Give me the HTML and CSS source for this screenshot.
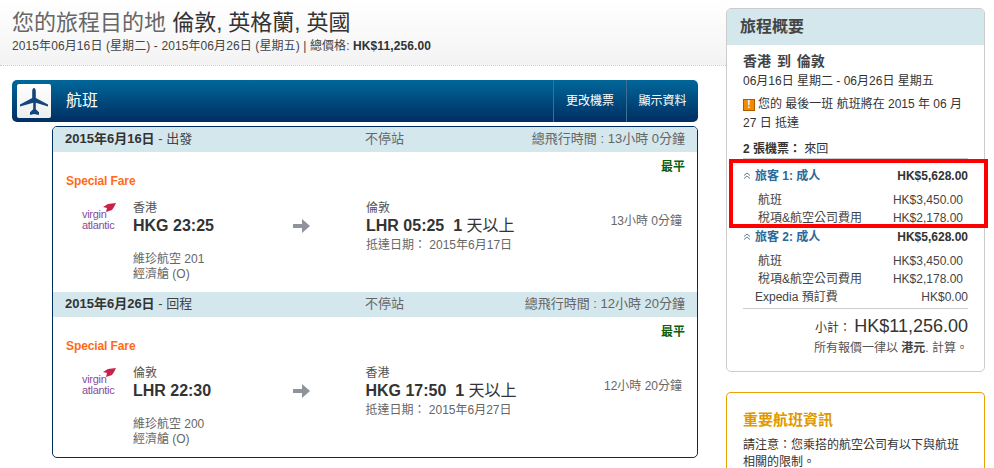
FILE: index.html
```html
<!DOCTYPE html>
<html lang="zh-Hant">
<head>
<meta charset="UTF-8">
<title>Expedia - 航班</title>
<link rel="stylesheet" href="styles.css">
</head>
<body>
<div class="page">
  <main class="main">
    <header class="trip-head">
      <h1>您的旅程目的地 <strong>倫敦, 英格蘭, 英國</strong></h1>
      <p>2015年06月16日 (星期二) - 2015年06月26日 (星期五) | 總價格: <b>HK$11,256.00</b></p>
    </header>

    <div class="flight-bar">
      <div class="plane-box">
        <svg width="34" height="34" viewBox="0 0 34 34"><path fill="#14457a" d="M17 4c1 0 1.800 1.500 1.800 3.500V14l12.200 6.500v2l-12.200-3.700v6.500l3.200 3V31L17 30l-4 1v-2.700l3.200-3v-6.500L3 22.500v-2L15.200 14V7.500C15.200 5.500 16 4 17 4z"/></svg>
      </div>
      <div class="bar-title">航班</div>
      <a class="bar-link">更改機票</a>
      <a class="bar-link">顯示資料</a>
    </div>

    <div class="flight-card">
      <!-- 去程 -->
      <div class="leg-head">
        <div class="leg-date"><b>2015年6月16日</b> - 出發</div>
        <div class="leg-stop">不停站</div>
        <div class="leg-total">總飛行時間 : 13小時 0分鐘</div>
      </div>
      <div class="leg-body">
        <div class="cheapest">最平</div>
        <div class="fare">Special Fare</div>
        <div class="leg-row">
          <div class="logo">
            <svg width="13" height="9" viewBox="0 0 13 9"><path fill="#c8214a" d="M13 0 5 1 0 4l4 1-1 4 6-2 2-3z"/></svg>
            <span>virgin<br>atlantic</span>
          </div>
          <div class="depart">
            <div class="city">香港</div>
            <div class="time">HKG 23:25</div>
            <div class="carrier">維珍航空 201<br>經濟艙 (O)</div>
          </div>
          <div class="arrow">
            <svg width="17" height="14" viewBox="0 0 17 14"><path fill="#8e9499" d="M0 5h9V0l8 7-8 7V9H0z"/></svg>
          </div>
          <div class="arrive">
            <div class="city">倫敦</div>
            <div class="time">LHR 05:25&nbsp; 1 <span class="plus">天以上</span></div>
            <div class="arrive-date">抵達日期： 2015年6月17日</div>
          </div>
          <div class="duration">13小時 0分鐘</div>
        </div>
      </div>

      <!-- 回程 -->
      <div class="leg-head">
        <div class="leg-date"><b>2015年6月26日</b> - 回程</div>
        <div class="leg-stop">不停站</div>
        <div class="leg-total">總飛行時間 : 12小時 20分鐘</div>
      </div>
      <div class="leg-body">
        <div class="cheapest">最平</div>
        <div class="fare">Special Fare</div>
        <div class="leg-row">
          <div class="logo">
            <svg width="13" height="9" viewBox="0 0 13 9"><path fill="#c8214a" d="M13 0 5 1 0 4l4 1-1 4 6-2 2-3z"/></svg>
            <span>virgin<br>atlantic</span>
          </div>
          <div class="depart">
            <div class="city">倫敦</div>
            <div class="time">LHR 22:30</div>
            <div class="carrier">維珍航空 200<br>經濟艙 (O)</div>
          </div>
          <div class="arrow">
            <svg width="17" height="14" viewBox="0 0 17 14"><path fill="#8e9499" d="M0 5h9V0l8 7-8 7V9H0z"/></svg>
          </div>
          <div class="arrive">
            <div class="city">香港</div>
            <div class="time">HKG 17:50&nbsp; 1 <span class="plus">天以上</span></div>
            <div class="arrive-date">抵達日期： 2015年6月27日</div>
          </div>
          <div class="duration">12小時 20分鐘</div>
        </div>
      </div>
    </div>
  </main>

  <aside class="side">
    <div class="summary">
      <h2>旅程概要</h2>
      <div class="summary-body">
        <div class="route">香港 到 倫敦</div>
        <div class="route-date">06月16日 星期二 - 06月26日 星期五</div>
        <div class="notice"><i class="warn">!</i>您的 最後一班 航班將在 2015 年 06 月 27 日 抵達</div>
        <div class="tickets"><b>2 張機票：</b> 來回</div>

        <div class="traveler first">
          <div class="highlight"></div>
          <div class="trav-head"><span class="trav-name"><svg class="chev" width="8" height="7" viewBox="0 0 8 7"><path fill="none" stroke="#5f7f96" d="M1 3.500 4 1l3 2.500M1 6.500 4 4l3 2.500"/></svg>旅客 1: 成人</span><b>HK$5,628.00</b></div>
          <div class="fee"><span>航班</span><span>HK$3,450.00</span></div>
          <div class="fee"><span>稅項&amp;航空公司費用</span><span>HK$2,178.00</span></div>
        </div>
        <div class="traveler">
          <div class="trav-head"><span class="trav-name"><svg class="chev" width="8" height="7" viewBox="0 0 8 7"><path fill="none" stroke="#5f7f96" d="M1 3.500 4 1l3 2.500M1 6.500 4 4l3 2.500"/></svg>旅客 2: 成人</span><b>HK$5,628.00</b></div>
          <div class="fee"><span>航班</span><span>HK$3,450.00</span></div>
          <div class="fee"><span>稅項&amp;航空公司費用</span><span>HK$2,178.00</span></div>
        </div>
        <div class="booking-fee"><span>Expedia 預訂費</span><span>HK$0.00</span></div>

        <div class="subtotal">小計： <span>HK$11,256.00</span></div>
        <div class="currency">所有報價一律以 <b>港元</b>. 計算。</div>
      </div>
    </div>

    <div class="important">
      <h3>重要航班資訊</h3>
      <p>請注意：您乘搭的航空公司有以下與航班相關的限制。</p>
    </div>
  </aside>
</div>
</body>
</html>
```

FILE: styles.css
```css
* { margin:0; padding:0; box-sizing:border-box; }
html, body { height:468px; overflow:hidden; }
body { font-family:'Liberation Sans','Noto Sans CJK TC',sans-serif; font-size:12px; color:#333; background:#fff; }
.page { display:flex; align-items:flex-start; }
.main { width:726px; flex:none; }

/* HEAD */
.trip-head { height:66px; padding:9px 0 0 12px; border-bottom:1px dotted #ccc; background:linear-gradient(#fff,#f3f3f3); }
.trip-head h1 { font-size:22px; line-height:27px; font-weight:400; color:#666; }
.trip-head h1 strong { font-weight:400; color:#333; }
.trip-head p { font-size:12px; line-height:18px; margin-top:1px; color:#444; letter-spacing:0.1px; }
.trip-head p b { color:#333; }

/* FLIGHT BAR */
.flight-bar { display:flex; align-items:stretch; width:686px; height:42px; margin:14px 0 4px 12px; border-radius:5px; background:linear-gradient(#00679a,#002e62); color:#fff; }
.plane-box { width:34px; height:34px; margin:4px 0 0 5px; background:linear-gradient(#fff,#eee); border-radius:2px; }
.bar-title { flex:1; padding-left:15px; font-size:16px; line-height:41px; }
.bar-link { width:73px; text-align:center; font-size:12px; line-height:42px; border-left:1px solid #3c6f93; }
.bar-link:last-child { width:72px; }

/* FLIGHT CARD */
.flight-card { width:646px; height:332px; margin-left:52px; border:1px solid #002e62; border-radius:5px; overflow:hidden; }
.leg-head { display:flex; height:25px; line-height:24px; padding:0 12px; background:#d3e7ed; font-size:13px; color:#444; }
.leg-date { width:300px; }
.leg-date b { color:#333; }
.leg-stop { width:120px; color:#666; }
.leg-total { flex:1; text-align:right; color:#666; }
.leg-body { height:140px; padding:6px 12px 0; position:relative; }
.cheapest { text-align:right; font-size:12px; line-height:18px; font-weight:700; color:#0b5c0b; }
.fare { font-size:12px; line-height:18px; font-weight:700; color:#ff6a1a; margin:-4px 0 0 1px; letter-spacing:-0.1px; }
.leg-row { display:flex; margin-top:10px; }
.logo { width:68px; padding:9px 0 0 17px; position:relative; color:#8a4b9c; font-size:11px; line-height:11px; letter-spacing:-0.3px; }
.logo svg { position:absolute; left:38px; top:3px; }
.logo span { display:block; }
.depart { width:160px; }
.city { font-size:12px; line-height:16px; color:#555; }
.time { font-size:16px; line-height:20px; font-weight:700; color:#333; white-space:nowrap; }
.plus { font-weight:400; }
.carrier { font-size:12px; line-height:14.500px; color:#666; margin-top:16px; }
.arrow { width:73px; padding-top:19px; }
.arrive { width:239px; }
.arrive-date { font-size:12px; line-height:16px; color:#666; margin-top:1px; }
.duration { flex:1; text-align:right; padding:11px 3px 0 0; font-size:12px; color:#666; white-space:nowrap; }

/* SUMMARY */
.side { width:259px; flex:none; padding-top:8px; }
.summary { height:364px; border:1px solid #ccc; border-radius:5px; }
.summary h2 { height:36px; padding-left:13px; line-height:36px; font-size:16px; font-weight:700; color:#444; background:#d3e7ed; border-radius:4px 4px 0 0; }
.summary-body { padding:7px 16px 0; }
.route { font-size:14px; line-height:18px; font-weight:700; color:#444; word-spacing:2px; }
.route-date { line-height:18px; font-size:12px; margin-top:2px; }
.notice { line-height:19px; margin-top:5px; font-size:12px; }
.warn { display:inline-block; width:12px; height:12px; margin-right:3px; background:#f08c00; border:1px solid #a85c00; color:#fff; font:700 10px/10px 'Liberation Sans',sans-serif; text-align:center; }
.tickets { margin-top:7px; line-height:18px; border-bottom:1px solid #ccc; }

.traveler { position:relative; padding-top:8px; }
.traveler + .traveler { padding-top:1px; }
.highlight { position:absolute; left:-14px; right:-20px; top:0; height:69px; border:4px solid #f00; pointer-events:none; }
.trav-head { display:flex; justify-content:space-between; height:24px; line-height:18px; }
.trav-name { font-weight:700; color:#2a6a9a; }
.chev { margin:0 4px 3px 0; vertical-align:middle; }
.fee { display:flex; justify-content:space-between; line-height:18px; padding:0 5px 0 15px; color:#444; }
.booking-fee { display:flex; justify-content:space-between; line-height:18px; padding:0 0 2px 12px; border-bottom:1px solid #ccc; color:#444; }
.subtotal { text-align:right; margin-top:6px; line-height:22px; font-size:12px; }
.subtotal span { font-size:18px; color:#333; }
.currency { text-align:right; line-height:18px; color:#555; }
.currency b { color:#444; }

/* IMPORTANT */
.important { margin-top:20px; height:76px; padding:17px 16px 0; border:1px solid #e5a200; border-bottom:none; border-radius:5px 5px 0 0; }
.important h3 { font-size:15px; line-height:20px; color:#e09a00; font-weight:700; }
.important p { margin-top:7px; font-size:12px; line-height:17px; color:#333; }
```
